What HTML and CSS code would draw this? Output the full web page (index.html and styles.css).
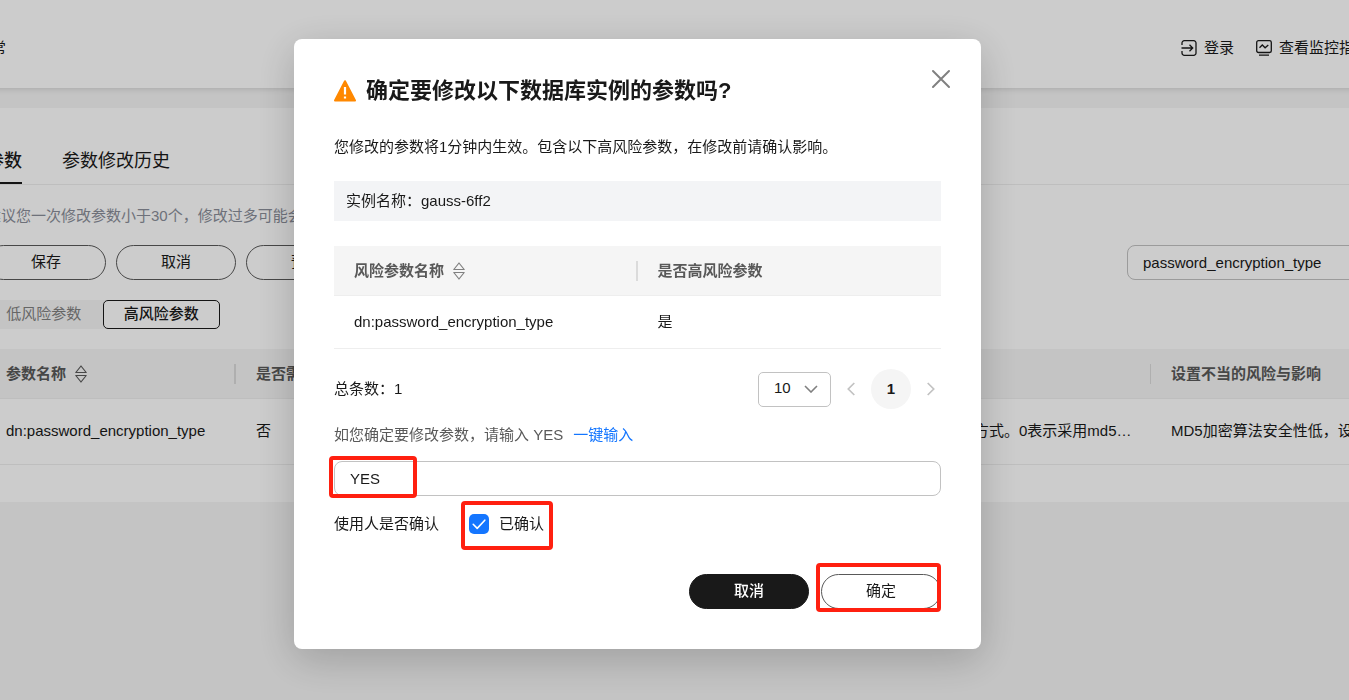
FILE: index.html
```html
<!DOCTYPE html>
<html lang="zh-CN">
<head>
<meta charset="utf-8">
<title>修改参数</title>
<link rel="stylesheet" href="styles.css">
</head>
<body>
<div class="page">
  <header class="topbar">
    <span>常</span>
    <nav class="topbar-links">
      <a href="#" class="icon-link">
        <svg width="16" height="16" viewBox="0 0 16 16" fill="none" stroke="currentColor" stroke-width="1.3"><path d="M1 5V3a2.3 2.3 0 0 1 2.3-2.3h9.4A2.3 2.3 0 0 1 15 3v10a2.3 2.3 0 0 1-2.3 2.3H3.300A2.300 2.300 0 0 1 1 13v-2M.5 8h11M8.500 4.800 11.700 8l-3.200 3.200"/></svg>
        登录</a>
      <a href="#" class="icon-link">
        <svg width="16" height="16" viewBox="0 0 16 16" fill="none" stroke="currentColor" stroke-width="1.3"><rect x=".7" y=".7" width="14.600" height="11.800" rx="1.800"/><path d="M3.500 7.800 6.300 5l2.800 2.800L12.300 5M3 15.200h10"/></svg>
        查看监控指</a>
    </nav>
  </header>

  <main class="card">
    <nav class="tabs">
      <a href="#" class="tab tab-active">参数</a>
      <a href="#" class="tab">参数修改历史</a>
    </nav>
    <p class="hint">建议您一次修改参数小于30个，修改过多可能会</p>
    <div class="toolbar">
      <div class="actions">
        <button type="button" class="btn">保存</button>
        <button type="button" class="btn">取消</button>
        <button type="button" class="btn">预览</button>
      </div>
      <input class="search" type="text" aria-label="搜索参数" value="password_encryption_type">
    </div>
    <div class="segment">
      <button type="button" class="segment-item">低风险参数</button>
      <button type="button" class="segment-item segment-on">高风险参数</button>
    </div>
    <table class="grid params">
      <colgroup><col class="col-name"><col><col class="col-desc"><col class="col-risk"></colgroup>
      <thead>
        <tr>
          <th class="divided"><span class="sortable">参数名称
            <svg width="14" height="18" viewBox="0 0 14 18" fill="none" stroke="currentColor" stroke-width="1.2" stroke-linejoin="round"><path d="M7 1 12.200 7.500H1.800zM1.800 10.500h10.400L7 17z"/></svg></span></th>
          <th>是否需</th>
          <th class="divided thin"></th>
          <th>设置不当的风险与影响</th>
        </tr>
      </thead>
      <tbody>
        <tr>
          <td>dn:password_encryption_type</td>
          <td>否</td>
          <td>方式。0表示采用md5…</td>
          <td>MD5加密算法安全性低，设</td>
        </tr>
      </tbody>
    </table>
  </main>
</div>

<div class="overlay">
  <section class="dialog" role="dialog" aria-modal="true" aria-labelledby="dialog-title">
    <button type="button" class="close" aria-label="关闭">
      <svg width="24" height="24" viewBox="0 0 24 24" fill="none" stroke="currentColor" stroke-width="2" stroke-linecap="round"><path d="m4 4 16 16M20 4 4 20"/></svg>
    </button>
    <h1 class="title" id="dialog-title">
      <svg width="22" height="22" viewBox="0 0 22 22"><path d="M11 1.200 21 20.500H1z" fill="#ff8800" stroke="#ff8800" stroke-width="2" stroke-linejoin="round"/><path d="M11 7v7.500M11 16.500v2" stroke="#fff" stroke-width="2.200"/></svg>
      确定要修改以下数据库实例的参数吗?</h1>
    <p class="desc">您修改的参数将1分钟内生效。包含以下高风险参数，在修改前请确认影响。</p>
    <p class="instance">实例名称：gauss-6ff2</p>
    <table class="grid risks">
      <thead>
        <tr>
          <th class="divided"><span class="sortable">风险参数名称
            <svg width="14" height="18" viewBox="0 0 14 18" fill="none" stroke="#808080" stroke-width="1.2" stroke-linejoin="round"><path d="M7 1 12.200 7.500H1.800zM1.800 10.500h10.400L7 17z"/></svg></span></th>
          <th>是否高风险参数</th>
        </tr>
      </thead>
      <tbody>
        <tr><td>dn:password_encryption_type</td><td>是</td></tr>
      </tbody>
    </table>
    <div class="pager">
      <span class="total">总条数：1</span>
      <span class="size">
        <select aria-label="每页条数"><option>10</option></select>
        <svg width="14" height="8" viewBox="0 0 14 8" fill="none" stroke="#808080" stroke-width="1.6"><path d="m1 1 6 6 6-6"/></svg>
      </span>
      <button type="button" class="step" aria-label="上一页"><svg width="8" height="14" viewBox="0 0 8 14" fill="none" stroke="currentColor" stroke-width="1.700"><path d="M7.300 1 1.300 7l6 6"/></svg></button>
      <button type="button" class="current">1</button>
      <button type="button" class="step" aria-label="下一页"><svg width="8" height="14" viewBox="0 0 8 14" fill="none" stroke="currentColor" stroke-width="1.700"><path d="m.7 1 6 6-6 6"/></svg></button>
    </div>
    <div class="prompt">
      <label for="confirm-text">如您确定要修改参数，请输入 YES</label>
      <a href="#">一键输入</a>
    </div>
    <div class="field">
      <input id="confirm-text" type="text" value="YES">
      <span class="mark mark-text"></span>
    </div>
    <div class="confirm">
      <span>使用人是否确认</span>
      <label class="check">
        <input type="checkbox" checked>
        <svg class="tick" width="20" height="20" viewBox="0 0 20 20" fill="none" stroke="#fff" stroke-width="1.600" stroke-linecap="round" stroke-linejoin="round"><path d="m4.200 10.300 4 4.100 7.600-8.200"/></svg>
        已确认
        <span class="mark mark-check"></span>
      </label>
    </div>
    <footer class="footer">
      <button type="button" class="btn btn-dark">取消</button>
      <span class="ok">
        <button type="button" class="btn">确定</button>
        <span class="mark mark-ok"></span>
      </span>
    </footer>
  </section>
</div>
</body>
</html>
```
FILE: styles.css
```css
* {
  box-sizing: border-box;
}

body {
  margin: 0;
  min-height: 100vh;
  overflow: hidden;
  background: #f5f5f5;
  color: #191919;
  font-family: "Liberation Sans", "Noto Sans CJK SC", sans-serif;
  font-size: 15px;
  line-height: 24px;
}

a {
  color: inherit;
  text-decoration: none;
}

p,
h1 {
  margin: 0;
}

button,
input,
select {
  margin: 0;
  color: inherit;
  font: inherit;
}

button {
  padding: 0;
  border: 0;
  background: none;
}

svg {
  flex: none;
}

/* The console page is scrolled sideways behind the dialog. */
.page {
  margin: 0 -10px 0 -14px;
}

.topbar {
  display: flex;
  align-items: center;
  justify-content: space-between;
  height: 88px;
  padding: 8px 5px 0;
  background: #fff;
  box-shadow: 0 1px 6px rgba(0, 0, 0, 0.14);
}

.topbar-links {
  display: flex;
  gap: 22px;
}

.icon-link {
  display: flex;
  align-items: center;
  gap: 7px;
}

.card {
  margin-top: 20px;
  padding-bottom: 37px;
  background: #fff;
}

.tabs {
  display: flex;
  gap: 40px;
  padding-top: 41px;
  border-bottom: 1px solid #eee;
  font-size: 18px;
}

.tab {
  padding-bottom: 9px;
  border-bottom: 2px solid transparent;
}

.tab-active {
  border-color: #191919;
  font-weight: 500;
}

.hint {
  margin: 19px 0 17px;
  color: #8a8e99;
}

.toolbar {
  display: flex;
  justify-content: space-between;
}

.actions {
  display: flex;
  gap: 10px;
}

.btn {
  width: 120px;
  height: 35px;
  padding-bottom: 2px;
  border: 1px solid #595959;
  border-radius: 18px;
}

.search {
  width: 232px;
  height: 35px;
  padding: 0 15px;
  border: 1px solid #c2c2c2;
  border-radius: 8px;
  background: #fff;
}

.segment {
  display: flex;
  gap: 1px;
  width: 234px;
  margin: 20px 0;
  border-radius: 6px;
  background: #f5f5f5;
}

.segment-item {
  flex: 1;
  height: 29px;
  padding-bottom: 2px;
  border-radius: 5px;
  color: #808080;
}

.segment-on {
  border: 1px solid #191919;
  background: #fff;
  color: #191919;
  font-weight: 500;
}

.grid {
  width: 100%;
  border-collapse: separate;
  border-spacing: 0;
  table-layout: fixed;
}

.grid th,
.grid td {
  padding: 0 20px;
  border-bottom: 1px solid #eee;
  text-align: left;
  white-space: nowrap;
}

.grid th {
  height: 50px;
  background: #f5f5f5;
  color: #595959;
  font-weight: 700;
}

.grid .divided {
  background: linear-gradient(#dbdbdb, #dbdbdb) right center / 2px 20px no-repeat #f5f5f5;
}

.grid .thin {
  background-size: 1px 20px;
}

.sortable {
  display: inline-flex;
  align-items: center;
  gap: 8px;
}

.params td {
  height: 66px;
  padding-bottom: 2px;
}

.col-name {
  width: 250px;
}

.col-desc {
  width: 197px;
}

.col-risk {
  width: 208px;
}

.overlay {
  position: fixed;
  inset: 0;
  display: flex;
  align-items: flex-start;
  justify-content: center;
  padding: 39px 74px 0 0;
  background: rgba(0, 0, 0, 0.2);
}

.dialog {
  position: relative;
  width: 687px;
  padding: 40px;
  border-radius: 8px;
  background: #fff;
  box-shadow: 0 10px 40px rgba(0, 0, 0, 0.2);
}

.close {
  position: absolute;
  top: 28px;
  right: 28px;
  width: 24px;
  height: 24px;
  color: #808080;
}

.title {
  display: flex;
  align-items: center;
  gap: 10px;
  font-size: 22px;
  font-weight: 700;
  line-height: 24px;
}

.desc {
  margin: 32px 0 22px;
}

.instance {
  padding: 8px 12px;
  background: #f3f4f6;
}

.risks {
  margin-top: 25px;
}

.risks td {
  height: 53px;
}

.pager {
  display: flex;
  align-items: center;
  margin-top: 20px;
}

.total {
  margin-right: auto;
}

.size {
  position: relative;
  width: 73px;
}

.size select {
  display: block;
  width: 100%;
  height: 35px;
  padding: 0 15px 2px;
  border: 1px solid #c2c2c2;
  border-radius: 5px;
  background: #fff;
  appearance: none;
}

.size svg {
  position: absolute;
  top: 13px;
  right: 13px;
  pointer-events: none;
}

.step {
  display: flex;
  align-items: center;
  justify-content: center;
  width: 20px;
  height: 40px;
  margin: 0 0 0 10px;
  color: #c2c2c2;
}

.current {
  width: 40px;
  height: 40px;
  margin-left: 10px;
  border-radius: 50%;
  background: #f5f5f5;
  font-weight: 700;
}

.prompt {
  display: flex;
  gap: 10px;
  margin: 14px 0;
  color: #595959;
}

.prompt a {
  color: #1476ff;
}

.field {
  position: relative;
}

.field input {
  display: block;
  width: 100%;
  height: 35px;
  padding: 0 15px;
  border: 1px solid #c2c2c2;
  border-radius: 8px;
}

.confirm {
  display: flex;
  gap: 30px;
  margin: 16px 0 38px;
}

.check {
  position: relative;
  display: flex;
  align-items: center;
  gap: 10px;
}

.check input {
  width: 20px;
  height: 20px;
  border-radius: 5px;
  background: #1476ff;
  appearance: none;
}

.tick {
  position: absolute;
  top: 2px;
  left: 0;
  pointer-events: none;
}

.footer {
  display: flex;
  justify-content: flex-end;
  gap: 12px;
}

.btn-dark {
  border-color: #191919;
  background: #191919;
  color: #fff;
  font-weight: 500;
}

.ok {
  position: relative;
  display: flex;
}

/* Red call-out frames laid over the controls to fill in. */
.mark {
  position: absolute;
  border: 4px solid #ff2010;
  border-radius: 4px;
  pointer-events: none;
}

.mark-text {
  top: -5px;
  left: -5px;
  width: 88px;
  height: 42px;
}

.mark-check {
  top: -11px;
  left: -8px;
  width: 92px;
  height: 49px;
}

.mark-ok {
  top: -11px;
  left: -5px;
  width: 125px;
  height: 49px;
}
```
